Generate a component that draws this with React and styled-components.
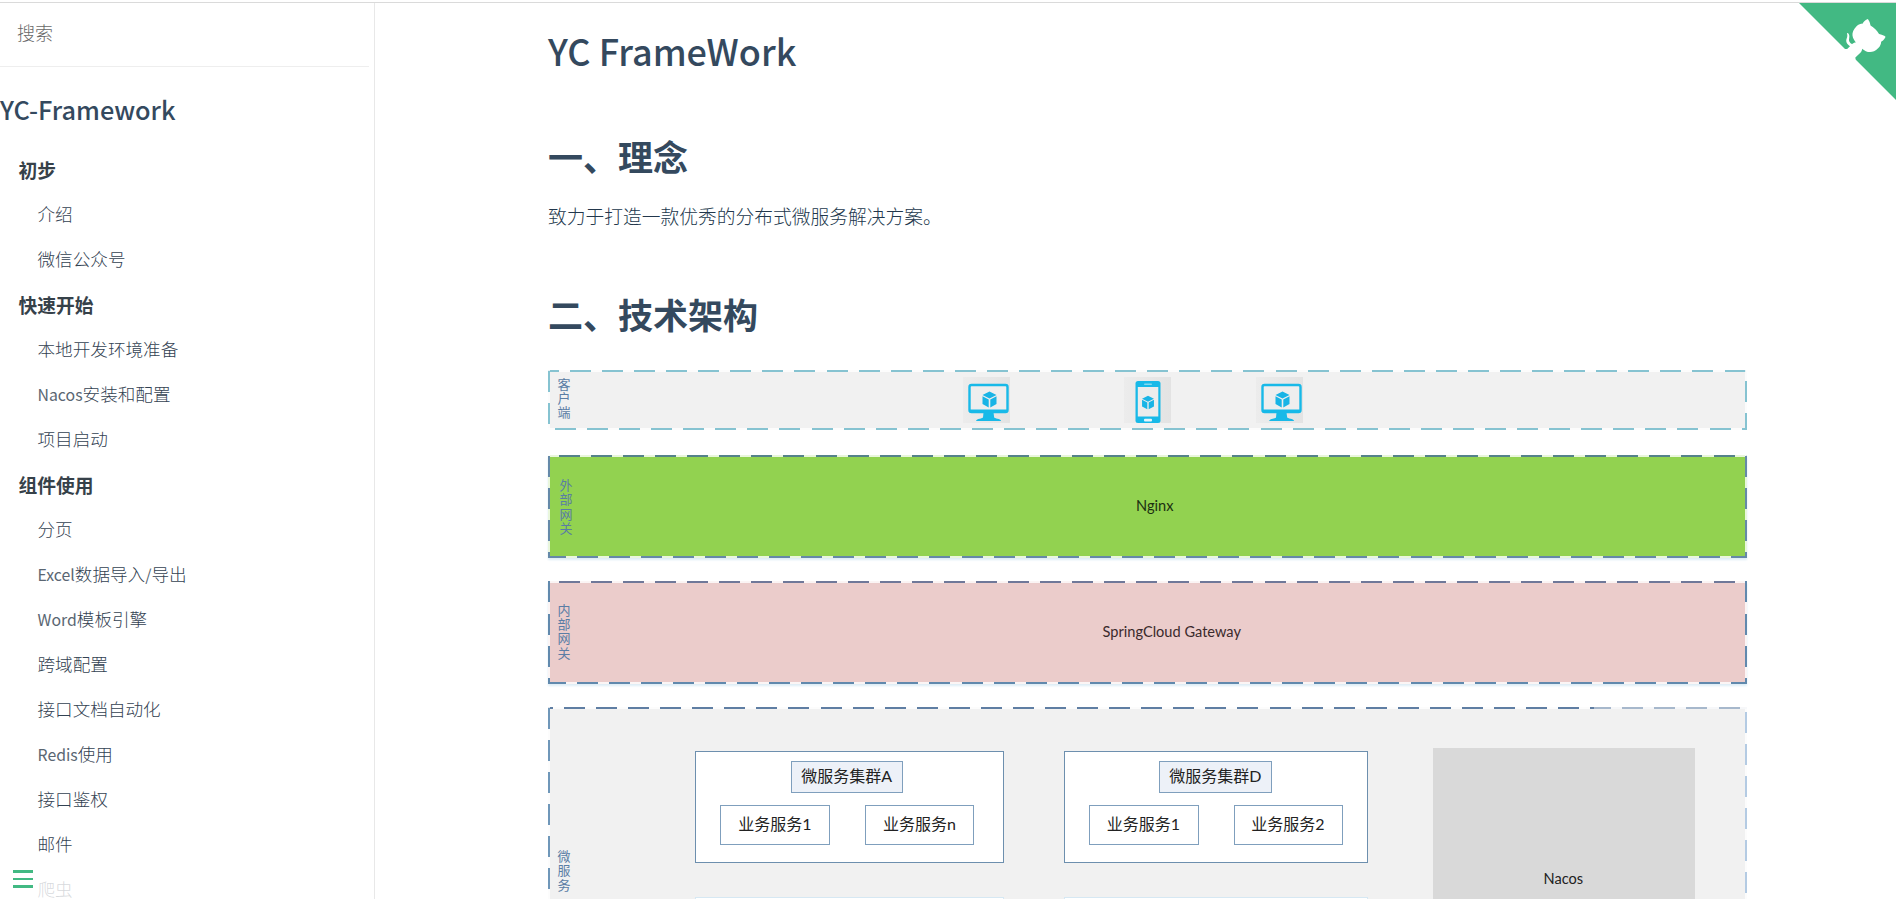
import React from 'react';
import styled, { createGlobalStyle } from 'styled-components';

const Global = createGlobalStyle`
  * { box-sizing: border-box; }
  html, body { margin: 0; height: 899px; overflow: hidden; background: #fff; }
  body {
    padding-top: 2px;
    font-family: "Noto Sans CJK SC", "Noto Sans", sans-serif;
    font-size: 18.75px;
    color: #34495e;
  }
`;

const Page = styled.div`
  height: 897px;
  border-top: 1px solid #dadada;
  display: flex;
  position: relative;
  overflow: hidden;
  background: #fff;
`;

const Sidebar = styled.aside`
  width: 375px;
  flex: none;
  border-right: 1px solid #e8e8e8;
  position: relative;
  overflow: hidden;
`;

const Search = styled.div`
  width: 369px;
  height: 64px;
  border-bottom: 1px solid #eee;
  padding: 0 0 0 17px;
  font-size: 18px;
  font-weight: 300;
  line-height: 59px;
  color: #686868;
`;

const SiteName = styled.h1`
  margin: 0;
  height: 80px;
  padding-top: 22px;
  font-size: 25.3px;
  line-height: 40px;
  font-weight: 500;
  white-space: nowrap;
`;

const NavList = styled.div`
  display: flex;
  flex-direction: column;
`;

const NavHeading = styled.div`
  height: 45px;
  line-height: 45px;
  padding-left: 18.5px;
  font-weight: 700;
  color: #364149;
`;

const NavLink = styled.div`
  height: 45px;
  line-height: 44px;
  padding-left: 37.5px;
  font-size: 17.6px;
  font-weight: 300;
  color: #334252;
  white-space: nowrap;
`;

const Latin = styled.span`
  font-size: 0.9em;
  font-weight: 400;
  color: #5a6672;
`;

const MenuToggle = styled.div`
  position: absolute;
  left: 0;
  bottom: 0;
  width: 355px;
  height: 39px;
  padding: 10px 13px;
  background: rgba(255, 255, 255, 0.8);
  display: flex;
  flex-direction: column;
  gap: 5px;
`;

const Bar = styled.span`
  height: ${(p) => p.$h}px;
  width: 20px;
  background: #42b983;
`;

const Corner = styled.svg`
  position: absolute;
  top: 0;
  right: -3px;
  width: 100px;
  height: 100px;
`;

const Main = styled.main`
  padding-left: 173px;
  flex: 1;
  min-width: 0;
`;

const Title = styled.h1`
  margin: 0;
  padding: 19px 0 0;
  height: 123px;
  font-size: 36px;
  font-weight: 500;
  line-height: 56px;
`;

const Section = styled.h1`
  margin: 0;
  height: 60px;
  line-height: 60px;
  font-size: 35px;
  font-weight: 700;
`;

const Para = styled.p`
  margin: 14px 0 53px;
  height: 31px;
  line-height: 31px;
  font-weight: 300;
  color: #22374c;
`;

const Diagram = styled.div`
  width: 1199px;
  margin-top: 26px;
  display: flex;
  flex-direction: column;
`;

const Band = styled.div`
  position: relative;
  flex: none;
  height: ${(p) => p.$h}px;
  margin-bottom: ${(p) => p.$gap}px;
  background: ${(p) => p.$bg};
  box-shadow: ${(p) => (p.$glow ? '0 2px 2px #deedf6' : 'none')};
  display: flex;
`;

const Edge = styled.i`
  position: absolute;
  overflow: hidden;
  ${(p) => (p.$side === 'top' || p.$side === 'bottom'
    ? `left: 0; right: 0; height: 2px; ${p.$side}: 0;`
    : `top: 0; bottom: 0; width: 2px; ${p.$side}: 0;`)}
  background: repeating-linear-gradient(
    ${(p) => (p.$side === 'top' || p.$side === 'bottom' ? '90deg' : '180deg')},
    ${(p) => {
      const gap = 'rgba(255,255,255,0.8)';
      const s = p.$start;
      if (s <= 11) return `${gap} 0 ${s}px, ${p.$c} ${s}px ${s + 21}px, ${gap} ${s + 21}px 32.07px`;
      return `${p.$c} 0 ${s - 11.07}px, ${gap} ${s - 11.07}px ${s}px, ${p.$c} ${s}px 32.07px`;
    }}
  );
`;

const Fade = styled.i`
  position: absolute;
  top: 0;
  right: 0;
  width: 153px;
  height: 2px;
  background: rgba(240, 242, 245, 0.5);
`;

const Side = styled.div`
  flex: none;
  width: 15px;
  margin: ${(p) => p.$top}px 0 0 ${(p) => p.$left}px;
  font-size: 13px;
  line-height: 14.4px;
  text-align: center;
  color: #5a7da5;
  overflow-wrap: anywhere;
`;

const Devices = styled.div`
  display: flex;
  padding: 7px 0 0 391.5px;
`;

const Tile = styled.div`
  width: 47px;
  height: 46px;
  margin-right: ${(p) => p.$gap || 0}px;
  background: linear-gradient(90deg, #ececec, #e3e3e3);
  display: flex;
  svg { display: block; }
`;

const Label = styled.div`
  font-family: Lato, "Noto Sans CJK SC", sans-serif;
  font-size: 14.6px;
  line-height: 20px;
  height: 20px;
  color: ${(p) => p.$c || '#222'};
  margin: ${(p) => p.$top}px 0 0 ${(p) => p.$left}px;
  white-space: nowrap;
`;

const Cluster = styled.div`
  flex: none;
  width: ${(p) => p.$w}px;
  height: 112px;
  border: 1.5px solid #6d8fae;
  background: #fff;
  padding: 9px 0 0 24px;
`;

const Box = styled.div`
  width: ${(p) => p.$w}px;
  height: ${(p) => p.$h}px;
  line-height: ${(p) => p.$h - 4}px;
  border: 1.5px solid #7f9fbd;
  background: ${(p) => p.$bg || '#fff'};
  text-align: center;
  font-size: 16px;
  font-family: Lato, "Noto Sans CJK SC", sans-serif;
  color: #222;
  white-space: nowrap;
`;

const ClusterHead = styled.div`
  padding-left: 70.5px;
  margin-bottom: 12px;
`;

const ClusterRow = styled.div`
  display: flex;
  gap: 35px;
`;

const Column = styled.div`
  flex: none;
  display: flex;
  flex-direction: column;
  gap: 34px;
  margin: 44px 0 0 ${(p) => p.$left}px;
`;

const NextCluster = styled.div`
  width: 100%;
  height: 60px;
  border: 1px solid #d6e8f3;
  background: #fff;
`;

const NacosBox = styled.div`
  flex: none;
  margin: 41px 0 0 65px;
  width: 262px;
  height: 200px;
  background: #d9d9d9;
`;

const Cube = ({ x, y, s }) => (
  <g transform={`translate(${x} ${y}) scale(${s})`}>
    <path fill="#18b4e6" d="M0-8 7-4.5 0-1-7-4.5Z M-7-3.2-.8 0V8L-7 4.6Z M7-3.2.8 0V8L7 4.6Z" />
  </g>
);

const Monitor = () => (
  <svg width="47" height="46" viewBox="0 0 47 46">
    <rect x="6.5" y="8" width="38" height="27" rx="2" fill="#eeeeee" stroke="#18b9e8" strokeWidth="2.4" />
    <path fill="#18b9e8" d="M6 32.500h39v2.5H6z M20.500 35.500h10l.7 5c0 1 6.500 1 7 3.500H13c.5-2.500 7-2.500 7-3.500Z" />
    <Cube x="26.500" y="22.500" s="1" />
  </svg>
);

const Phone = () => (
  <svg width="47" height="46" viewBox="0 0 47 46">
    <rect x="11.500" y="4" width="25" height="42" rx="2.500" fill="#18b9e8" />
    <rect x="13.800" y="10" width="20.500" height="29.500" fill="#ececec" />
    <rect x="20" y="6.500" width="8" height="1.500" rx=".7" fill="#83d9f1" />
    <rect x="20" y="41.800" width="8" height="2.600" rx="1" fill="#e5f5fa" />
    <Cube x="24" y="25.500" s=".85" />
  </svg>
);

const NAV = [
  ['初步', ['介绍', '微信公众号']],
  ['快速开始', ['本地开发环境准备', 'Nacos安装和配置', '项目启动']],
  ['组件使用', ['分页', 'Excel数据导入/导出', 'Word模板引擎', '跨域配置', '接口文档自动化', 'Redis使用', '接口鉴权', '邮件', '爬虫']],
];

const mixed = (text) =>
  text.split(/([A-Za-z/]+)/).filter(Boolean).map((t, i) =>
    /[A-Za-z/]/.test(t) ? <Latin key={i}>{t}</Latin> : t);

const Edges = ({ c, ct, cr, top, right, bottom, left }) => (
  <>
    <Edge $side="top" $c={ct || c} $start={top} />
    <Edge $side="right" $c={cr || c} $start={right} />
    {bottom !== undefined && <Edge $side="bottom" $c={c} $start={bottom} />}
    <Edge $side="left" $c={c} $start={left} />
  </>
);

const ServiceCluster = ({ w, name, first, second }) => (
  <Cluster $w={w}>
    <ClusterHead><Box $w={112.5} $h={32} $bg="#edf1f8">{name}</Box></ClusterHead>
    <ClusterRow>
      <Box $w={110} $h={40}>{first}</Box>
      <Box $w={109} $h={40}>{second}</Box>
    </ClusterRow>
  </Cluster>
);

export default function App() {
  return (
    <>
      <Global />
      <Page>
        <Sidebar>
          <Search>搜索</Search>
          <SiteName>YC-Framework</SiteName>
          <NavList>
            {NAV.map(([head, links]) => (
              <React.Fragment key={head}>
                <NavHeading>{head}</NavHeading>
                {links.map((l) => <NavLink key={l}>{mixed(l)}</NavLink>)}
              </React.Fragment>
            ))}
          </NavList>
          <MenuToggle>
            <Bar $h={3} /><Bar $h={2} /><Bar $h={3} />
          </MenuToggle>
        </Sidebar>
        <Main>
          <Title>YC FrameWork</Title>
          <Section>一、理念</Section>
          <Para>致力于打造一款优秀的分布式微服务解决方案。</Para>
          <Section>二、技术架构</Section>
          <Diagram>
            <Band $h={60} $gap={25} $bg="#f1f1f1">
              <Edges c="#86c3d1" top={22} right={11} bottom={7} left={1} />
              <Side $top={6.5} $left={8.5}>客户端</Side>
              <Devices>
                <Tile $gap={114}><Monitor /></Tile>
                <Tile $gap={85}><Phone /></Tile>
                <Tile><Monitor /></Tile>
              </Devices>
            </Band>
            <Band $h={103} $gap={23} $bg="#92d250" $glow>
              <Edges c="#6589a8" ct="#55828a" top={11} right={0.5} bottom={28.7} left={0.5} />
              <Side $top={23} $left={10.5}>外部网关</Side>
              <Label $top={41} $left={562.5} $c="#1b3010">Nginx</Label>
            </Band>
            <Band $h={103} $gap={23} $bg="#ebcccb" $glow>
              <Edges c="#6189ad" ct="#6f7899" top={11} right={0.5} bottom={28.7} left={0.5} />
              <Side $top={21.5} $left={8.5}>内部网关</Side>
              <Label $top={41} $left={531} $c="#3a2a2c">SpringCloud Gateway</Label>
            </Band>
            <Band $h={260} $gap={0} $bg="#f1f1f1">
              <Edges c="#6f97b9" ct="#5f7ea3" cr="#b4cbe3" top={16} right={5} left={0.5} />
              <Fade />
              <Side $top={142} $left={8.5}>微服务</Side>
              <Column $left={123.5}>
                <ServiceCluster w={309} name="微服务集群A" first="业务服务1" second="业务服务n" />
                <NextCluster />
              </Column>
              <Column $left={59.5}>
                <ServiceCluster w={304} name="微服务集群D" first="业务服务1" second="业务服务2" />
                <NextCluster />
              </Column>
              <NacosBox><Label $top={121} $left={111}>Nacos</Label></NacosBox>
            </Band>
          </Diagram>
        </Main>
        <Corner viewBox="0 0 250 250">
          <path fill="#42b983" d="M0,0 L115,115 L130,115 L142,142 L250,250 L250,0 Z" />
          <path fill="#fff" d="M128.3,109.0 C113.8,99.7 119.0,89.6 119.0,89.6 C122.0,82.7 120.5,78.6 120.5,78.6 C119.2,72.0 123.4,76.3 123.4,76.3 C127.3,80.9 125.5,87.3 125.5,87.3 C122.9,97.6 130.6,101.9 134.4,103.2" />
          <path fill="#fff" d="M115.0,115.0 C114.9,115.1 118.7,116.5 119.8,115.4 L133.7,101.6 C136.9,99.2 139.9,98.4 142.2,98.6 C133.8,88.0 127.5,74.4 143.8,58.0 C148.5,53.4 154.0,51.2 159.7,51.0 C160.3,49.4 163.2,43.6 171.4,40.1 C171.4,40.1 176.1,42.5 178.8,56.2 C183.1,58.6 187.2,61.8 190.9,65.4 C194.5,69.0 197.7,73.2 200.1,77.6 C213.8,80.2 216.3,84.9 216.3,84.9 C212.7,93.1 206.9,96.0 205.4,96.6 C205.1,102.4 203.0,107.8 198.3,112.5 C181.9,128.9 168.3,122.5 157.7,114.1 C157.9,116.9 156.7,120.9 152.7,124.9 L141.0,136.5 C139.8,137.7 141.6,141.9 141.8,141.8 Z" />
        </Corner>
      </Page>
    </>
  );
}
